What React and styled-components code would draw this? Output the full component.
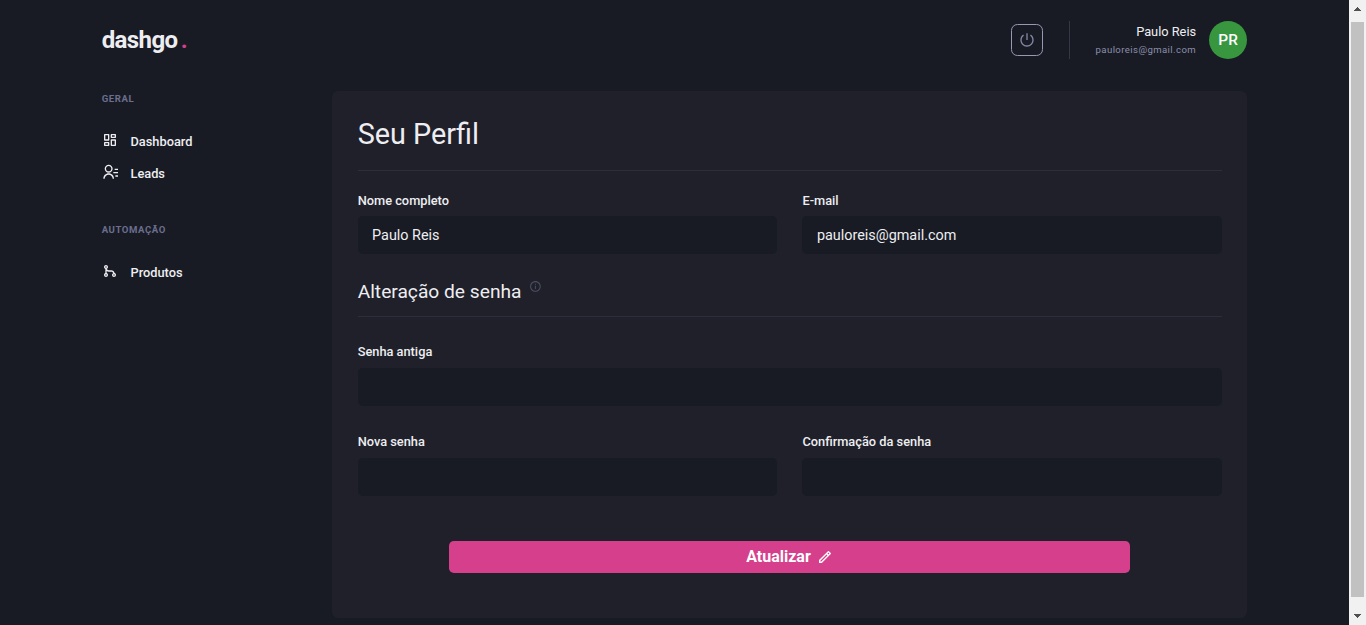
import React from "react";
import styled, { createGlobalStyle } from "styled-components";
import {
  RiDashboardLine,
  RiContactsLine,
  RiGitMergeLine,
  RiShutDownLine,
  RiInformationLine,
  RiPencilLine,
} from "react-icons/ri";

const GlobalStyle = createGlobalStyle`
  * { box-sizing: border-box; }
  html { font-size: 12.8px; }
  body {
    margin: 0;
    overflow: hidden;
    background: #181b23;
    color: #eeeef2;
    font-family: Roboto, sans-serif;
    line-height: 1.5;
  }
  h1, h2, p { margin: 0; font-weight: 400; }
`;

const Viewport = styled.div`
  display: flex;
  height: 625px;
`;

const Page = styled.div`
  flex: 1;
  min-width: 0;
  padding: 0 101.7px;
`;

const Header = styled.header`
  display: flex;
  align-items: center;
  height: 80px;
`;

const Logo = styled.div`
  flex: 1;
  font-size: 24px;
  font-weight: 700;
  letter-spacing: -0.6px;
`;

const Dot = styled.span`
  margin-left: 3.2px;
  color: #d53f8c;
`;

const PowerButton = styled.button`
  display: flex;
  align-items: center;
  justify-content: center;
  width: 32px;
  height: 32px;
  margin-right: 26px;
  padding: 0;
  border: 1px solid #9699b0;
  border-radius: 6.4px;
  background: none;
  color: #8487a5;
  font-size: 16px;
`;

const UserInfo = styled.div`
  display: flex;
  align-items: center;
  height: 38px;
  padding-left: 25.6px;
  border-left: 1px solid #353646;
`;

const UserText = styled.div`
  margin-right: 12.8px;
  text-align: right;
  font-size: 12.8px;
`;

const UserEmail = styled.p`
  color: #8c8fac;
  font-size: 9.6px;
  letter-spacing: 0.4px;
  line-height: 16px;
`;

const Avatar = styled.div`
  display: flex;
  align-items: center;
  justify-content: center;
  width: 38.4px;
  height: 38.4px;
  padding-top: 1px;
  border-radius: 50%;
  background: #38963e;
  color: #fff;
  font-size: 15.4px;
  font-weight: 500;
`;

const Body = styled.div`
  display: flex;
  margin-top: 11px;
`;

const Sidebar = styled.aside`
  width: 230.4px;
  flex: none;
`;

const NavSection = styled.nav`
  margin-bottom: 38.4px;
`;

const NavTitle = styled.p`
  margin-bottom: 25.6px;
  color: #6b6e8e;
  font-size: 9.6px;
  font-weight: 700;
  letter-spacing: 0.55px;
  line-height: 15.4px;
`;

const NavLink = styled.a`
  display: flex;
  align-items: flex-start;
  height: 19.2px;
  margin-bottom: 12.8px;
  font-size: 12.8px;
  font-weight: 500;

  svg {
    margin-right: 12.8px;
    font-size: 16px;
  }
`;

const Card = styled.main`
  flex: 1;
  height: 527px;
  padding: 25.6px;
  border-radius: 6.4px;
  background: #1f2029;
`;

const Title = styled.h1`
  font-size: 28.8px;
  line-height: 34.6px;
`;

const Subtitle = styled.h2`
  display: flex;
  margin-top: 25.6px;
  font-size: 19.2px;
  line-height: 23px;

  svg {
    margin-left: 7.4px;
    color: #4b4d63;
    font-size: 12.8px;
  }
`;

const Divider = styled.hr`
  height: 1px;
  margin: ${(p) => p.$top}px 0 ${(p) => p.$bottom}px;
  border: 0;
  background: #2d2e3c;
`;

const FieldRow = styled.div`
  display: grid;
  grid-template-columns: repeat(${(p) => p.$columns}, 1fr);
  gap: 25.6px;
  margin-bottom: ${(p) => p.$bottom || 0}px;
`;

const Label = styled.label`
  display: block;
  margin-bottom: 6.4px;
  font-size: 12.8px;
  font-weight: 500;
  line-height: 19.2px;
`;

const Input = styled.input`
  display: block;
  width: 100%;
  height: 38px;
  padding: 0 14.4px;
  border: 0;
  border-radius: 4.8px;
  background: #181b23;
  color: #eeeef2;
  font: 400 14.4px Roboto, sans-serif;
`;

const SubmitButton = styled.button`
  display: flex;
  align-items: center;
  justify-content: center;
  width: 681px;
  height: 32px;
  margin: 45.4px auto 0;
  padding: 0 0 1px;
  border: 0;
  border-radius: 4.8px;
  background: #d53f8c;
  color: #fff;
  font: 700 16px Roboto, sans-serif;

  svg { margin: 1px 0 0 6.4px; }
`;

const ScrollTrack = styled.div`
  display: flex;
  flex-direction: column;
  align-items: center;
  width: 17px;
  flex: none;
  padding: 7px 0;
  background: #f1f1f1;
`;

const ScrollThumb = styled.div`
  flex: 1;
  width: 13px;
  margin: 11px 0 17px;
  background: #c1c1c1;
`;

const ScrollArrow = styled.svg`
  display: block;
  width: 7px;
  height: 4px;
  fill: #505050;
`;

function Field({ label, value = "", type = "text" }) {
  return (
    <div>
      <Label>{label}</Label>
      <Input type={type} defaultValue={value} aria-label={label} />
    </div>
  );
}

export default function App() {
  return (
    <>
      <GlobalStyle />
      <Viewport>
        <Page>
          <Header>
            <Logo>
              dashgo<Dot>.</Dot>
            </Logo>
            <PowerButton aria-label="Sair">
              <RiShutDownLine />
            </PowerButton>
            <UserInfo>
              <UserText>
                <p>Paulo Reis</p>
                <UserEmail>pauloreis@gmail.com</UserEmail>
              </UserText>
              <Avatar>PR</Avatar>
            </UserInfo>
          </Header>
          <Body>
            <Sidebar>
              <NavSection>
                <NavTitle>GERAL</NavTitle>
                <NavLink><RiDashboardLine />Dashboard</NavLink>
                <NavLink><RiContactsLine />Leads</NavLink>
              </NavSection>
              <NavSection>
                <NavTitle>AUTOMAÇÃO</NavTitle>
                <NavLink><RiGitMergeLine />Produtos</NavLink>
              </NavSection>
            </Sidebar>
            <Card>
              <Title>Seu Perfil</Title>
              <Divider $top={19} $bottom={19.4} />
              <FieldRow $columns={2}>
                <Field label="Nome completo" value="Paulo Reis" />
                <Field label="E-mail" value="pauloreis@gmail.com" />
              </FieldRow>
              <Subtitle>
                Alteração de senha
                <RiInformationLine />
              </Subtitle>
              <Divider $top={13} $bottom={25.4} />
              <FieldRow $columns={1} $bottom={26.4}>
                <Field label="Senha antiga" type="password" />
              </FieldRow>
              <FieldRow $columns={2}>
                <Field label="Nova senha" type="password" />
                <Field label="Confirmação da senha" type="password" />
              </FieldRow>
              <SubmitButton>
                Atualizar
                <RiPencilLine />
              </SubmitButton>
            </Card>
          </Body>
        </Page>
        <ScrollTrack>
          <ScrollArrow viewBox="0 0 7 4" shapeRendering="crispEdges">
            <path d="M3 0h1v1h1v1h1v1h1v1H0V3h1V2h1V1h1z" />
          </ScrollArrow>
          <ScrollThumb />
          <ScrollArrow viewBox="0 0 7 4" shapeRendering="crispEdges">
            <path d="M0 0h7v1H6v1H5v1H4v1H3V3H2V2H1V1H0z" />
          </ScrollArrow>
        </ScrollTrack>
      </Viewport>
    </>
  );
}
